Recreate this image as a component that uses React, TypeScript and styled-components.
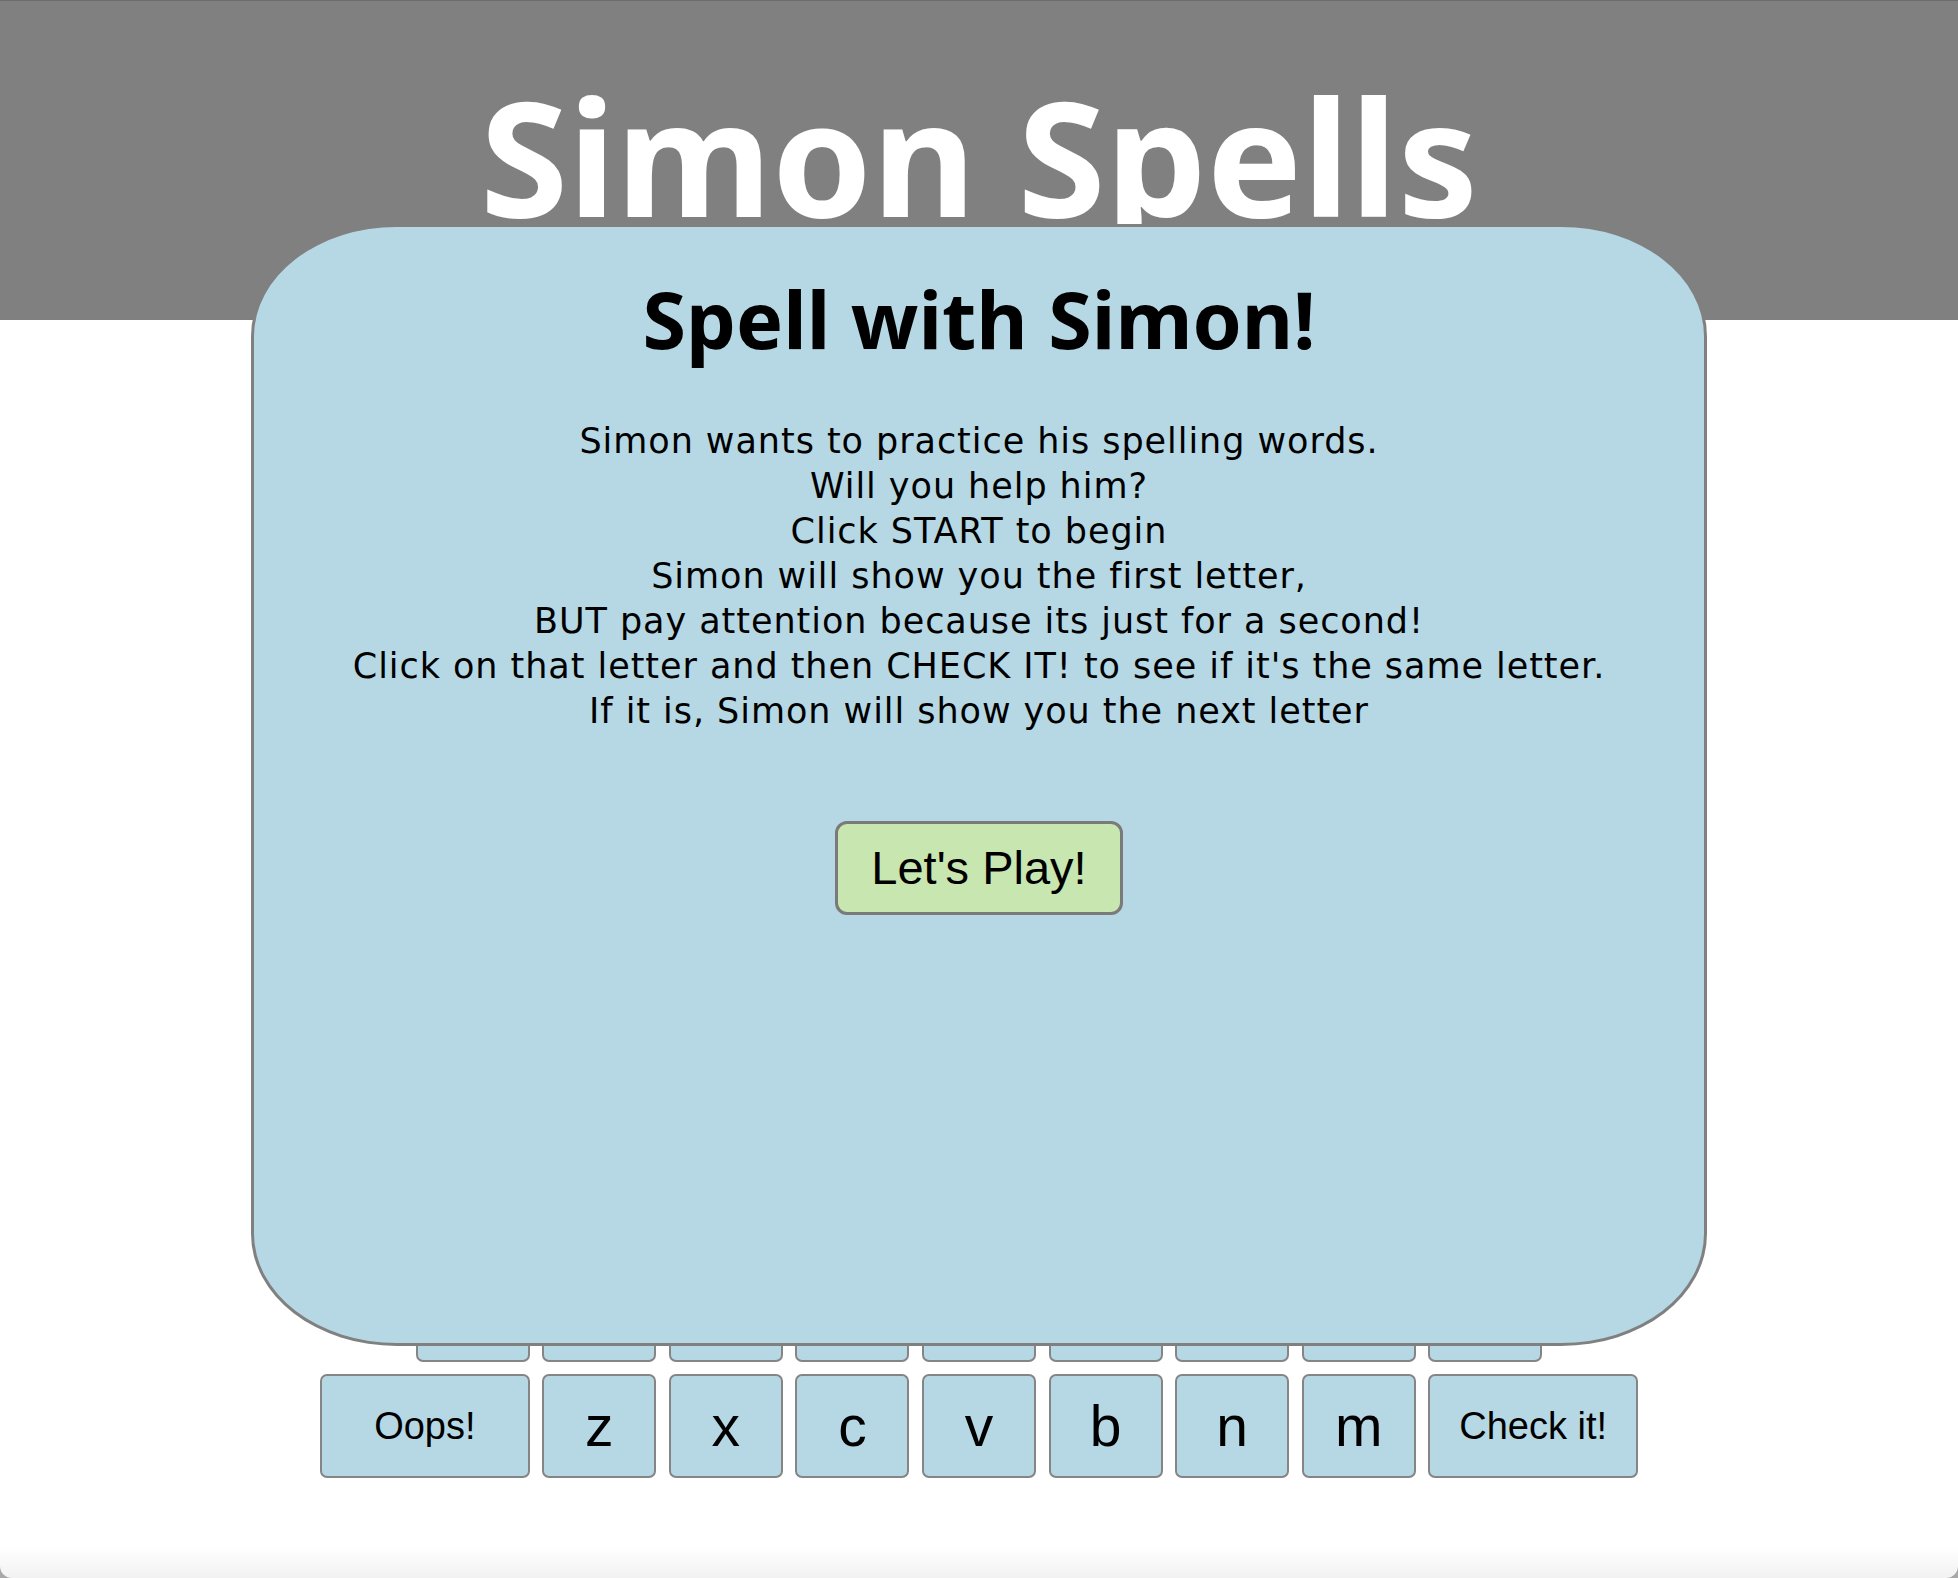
import styled, { createGlobalStyle } from 'styled-components'

const GlobalStyle = createGlobalStyle`
html {
    background: #a8a8a8;
}
body {
    margin: 0;
    font-family: "Noto Sans", "DejaVu Sans", sans-serif;
}
`

const topRow = ['q', 'w', 'e', 'r', 't', 'y', 'u', 'i', 'o', 'p']
const midRow = ['a', 's', 'd', 'f', 'g', 'h', 'j', 'k', 'l']
const lowRow = ['z', 'x', 'c', 'v', 'b', 'n', 'm']

const rules = [
  'Simon wants to practice his spelling words.',
  'Will you help him?',
  'Click START to begin',
  'Simon will show you the first letter,',
  'BUT pay attention because its just for a second!',
  "Click on that letter and then CHECK IT! to see if it's the same letter.",
  'If it is, Simon will show you the next letter',
]

const App = () => {
  return (
    <Page>
      <GlobalStyle />
      <Header>
        <Title>Simon Spells</Title>
      </Header>
      <Board />
      <Keyboard>
        <KeyRow>
          {topRow.map((k) => (
            <Key key={k}>{k}</Key>
          ))}
        </KeyRow>
        <KeyRow>
          {midRow.map((k) => (
            <Key key={k}>{k}</Key>
          ))}
        </KeyRow>
        <KeyRow>
          <Key wide>Oops!</Key>
          {lowRow.map((k) => (
            <Key key={k}>{k}</Key>
          ))}
          <Key wide>Check it!</Key>
        </KeyRow>
      </Keyboard>

      <Modal>
        <ModalTitle>Spell with Simon!</ModalTitle>
        <Rules>
          {rules.map((r) => (
            <span key={r}>{r}</span>
          ))}
        </Rules>
        <PlayButton>Let's Play!</PlayButton>
      </Modal>
    </Page>
  )
}

export default App

const Page = styled.div`
position: relative;
min-height: 1578px;
background: linear-gradient(to bottom, #ffffff calc(100% - 32px), #f2f2f2);
border-radius: 0 0 12px 12px;
overflow: hidden;
`

const Header = styled.header`
height: 320px;
box-sizing: border-box;
border-top: 1px solid #6c6c6c;
background-color: #808080;
padding-top: 74px;
`

const Title = styled.h1`
margin: 0;
font-size: 160px;
line-height: 1;
font-weight: 700;
color: #ffffff;
text-align: center;
`

const Board = styled.div`
height: 822px;
`

const Keyboard = styled.div`
display: flex;
flex-direction: column;
gap: 12px;
`

const KeyRow = styled.div`
display: flex;
justify-content: center;
gap: 12.6px;
`

const Key = styled.button<{ wide?: boolean }>`
box-sizing: border-box;
width: ${({ wide }) => (wide ? '209.5px' : '114px')};
height: 104px;
padding: 0;
display: flex;
align-items: center;
justify-content: center;
background-color: #b6d8e4;
border: 2px solid #858585;
border-radius: 7px;
font-family: "Liberation Sans", Arial, sans-serif;
font-size: ${({ wide }) => (wide ? '38px' : '57px')};
color: #000;
`

const Modal = styled.div`
position: absolute;
top: 224px;
left: 0;
right: 0;
margin: 0 auto;
box-sizing: border-box;
width: 1456px;
height: 1122px;
background-color: #b6d8e4;
border: 3px solid #808080;
border-radius: 10%;
padding-top: 45px;
display: flex;
flex-direction: column;
align-items: center;
`

const ModalTitle = styled.h2`
margin: 0;
font-size: 79px;
line-height: 1.2;
font-weight: 700;
color: #000;
`

const Rules = styled.p`
margin: 52px 0 0;
display: flex;
flex-direction: column;
align-items: center;
font-family: "DejaVu Sans", "Noto Sans", sans-serif;
font-size: 35px;
letter-spacing: 0.95px;
line-height: 45px;
color: #000;
`

const PlayButton = styled.button`
margin-top: 87px;
box-sizing: border-box;
height: 94px;
padding: 0 33px;
background-color: #c8e6b0;
border: 3px solid #7a7a7a;
border-radius: 12px;
font-family: "Liberation Sans", Arial, sans-serif;
font-size: 47px;
color: #000;
`
